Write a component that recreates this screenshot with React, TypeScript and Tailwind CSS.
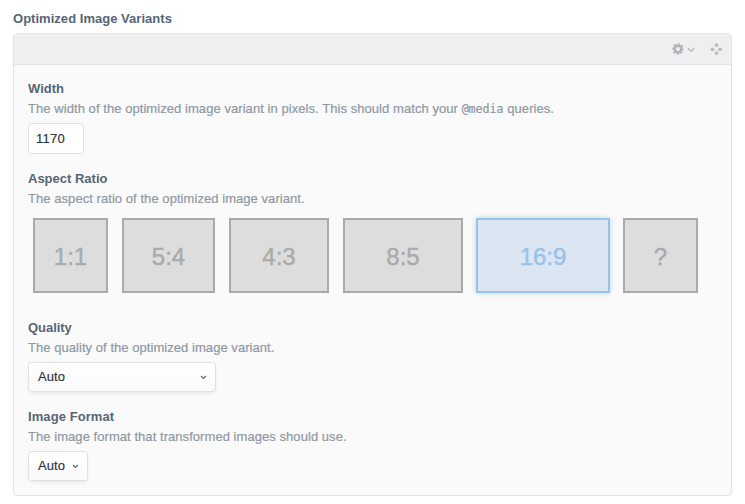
import type { ReactNode } from "react";

function Field({ label, hint, className, hintClass, labelClass, children }: { label: string; hint: ReactNode; className: string; hintClass: string; labelClass: string; children: ReactNode }) {
  return (
    <section className={className}>
      <h2 className={`h-5 whitespace-nowrap pt-px text-[13px] leading-5 font-bold text-[#576575] ${labelClass}`}>{label}</h2>
      <p className={`h-5 whitespace-nowrap pt-px text-[13px] leading-5 text-[#8f98a3] [-webkit-text-stroke:0.2px_#8f98a3] ${hintClass}`}>{hint}</p>
      {children}
    </section>
  );
}

function Select({ value, className }: { value: string; className: string }) {
  return (
    <button className={`mt-[5px] flex h-[30px] items-center justify-between rounded-[3px] border border-[#e0e1e4] bg-linear-to-b from-white to-[#fafafa] pl-[9px] text-left text-[13px] text-[#29323d] shadow-[0_2px_5px_-2px_rgba(0,0,20,0.12)] ${className}`}>
      <span className="tracking-[0.1px] [-webkit-text-stroke:0.15px_#29323d]">{value}</span>
      <svg width="7" height="5" viewBox="0 0 7 5" fill="none" stroke="#5b646e" strokeWidth="1.1"><path d="M1 1l2.5 2.4L6 1" /></svg>
    </button>
  );
}

const ratios = [
  { label: "1:1", box: "w-[75px]" },
  { label: "5:4", box: "w-[93px] ml-[14px]" },
  { label: "4:3", box: "w-[100px] ml-[14px]" },
  { label: "8:5", box: "w-[120px] ml-[14px]" },
  { label: "16:9", box: "w-[134px] ml-[13px]", active: true },
  { label: "?", box: "w-[75px] ml-[13px]" },
];

function Gear() {
  return (
    <svg width="12" height="12" viewBox="0 0 12 12" fill="none" stroke="#b1b4b7">
      <circle cx="6" cy="6" r="3.3" strokeWidth="2.6" />
      <circle cx="6" cy="6" r="4.9" strokeWidth="1.8" strokeDasharray="2.2 1.648" strokeDashoffset="1.1" />
    </svg>
  );
}

export default function App() {
  return (
    <main className="h-[504px] w-[745px] overflow-hidden bg-white pt-2 pl-[13px] font-['Liberation_Sans',Arial,sans-serif]">
      <h1 className="h-[25px] pt-px text-[13px] leading-5 font-bold tracking-[0.03px] whitespace-nowrap text-[#576575]">Optimized Image Variants</h1>
      <div className="h-[463px] w-[719px] overflow-hidden rounded-[4px] border border-[#e1e3e5] bg-[#fafafa]">
        <header className="flex h-[31px] items-center justify-end border-b border-[#e1e3e5] bg-[#eeeff1] pr-[9px]">
          <Gear />
          <svg className="mt-px ml-[3px]" width="8" height="6" viewBox="0 0 8 6" fill="none" stroke="#b1b4b7" strokeWidth="1.2"><path d="M.8 1L4 4.3 7.2 1" /></svg>
          <svg className="ml-[15px]" width="12" height="12" viewBox="0 0 12 12" fill="#b9bbbe"><circle cx="6.5" cy="2.2" r="1.9" /><circle cx="2.4" cy="6.3" r="1.9" /><circle cx="10.1" cy="6.3" r="1.9" /><circle cx="6.5" cy="10.1" r="1.9" /></svg>
        </header>
        <div className="pt-[13px] pl-[14px]">
          <Field label="Width" className="h-[90px]" labelClass="" hintClass="tracking-[0.062px]" hint={<>The width of the optimized image variant in pixels. This should match your <code className="font-['DejaVu_Sans_Mono',monospace] text-[11.7px] tracking-[-0.04px]">@media</code> queries.</>}>
            <input className="mt-[5px] block h-[31px] w-14 rounded-[3px] border border-[#e0e2e5] bg-white px-[7px] text-[13px] tracking-[0.25px] text-[#29323d] [-webkit-text-stroke:0.15px_#29323d]" defaultValue="1170" />
          </Field>
          <Field label="Aspect Ratio" className="h-[149px]" labelClass="" hintClass="tracking-[0.058px]" hint="The aspect ratio of the optimized image variant.">
            <div className="mt-[10px] flex pl-[5px]">
              {ratios.map((r) => (
                <div key={r.label} className={`flex h-[75px] shrink-0 items-center justify-center border-2 pt-[2px] text-[24px] ${r.box} ${r.active ? "border-[#98c2e8] bg-[#dbe6f2] text-[#98c2e8] shadow-[0_0_5px_rgba(120,180,235,0.55)] [-webkit-text-stroke:0.4px_#98c2e8]" : "border-[#aaaaaa] bg-[#dddddd] text-[#aaaaaa] [-webkit-text-stroke:0.4px_#aaaaaa]"}`}>{r.label}</div>
              ))}
            </div>
          </Field>
          <Field label="Quality" className="h-[89px]" labelClass="tracking-[-0.04px]" hintClass="tracking-[0.05px]" hint="The quality of the optimized image variant.">
            <Select value="Auto" className="w-[188px] pr-[8px]" />
          </Field>
          <Field label="Image Format" className="" labelClass="tracking-[0.08px]" hintClass="tracking-[0.055px]" hint="The image format that transformed images should use.">
            <Select value="Auto" className="w-[60px] pr-[8px]" />
          </Field>
        </div>
      </div>
    </main>
  );
}
